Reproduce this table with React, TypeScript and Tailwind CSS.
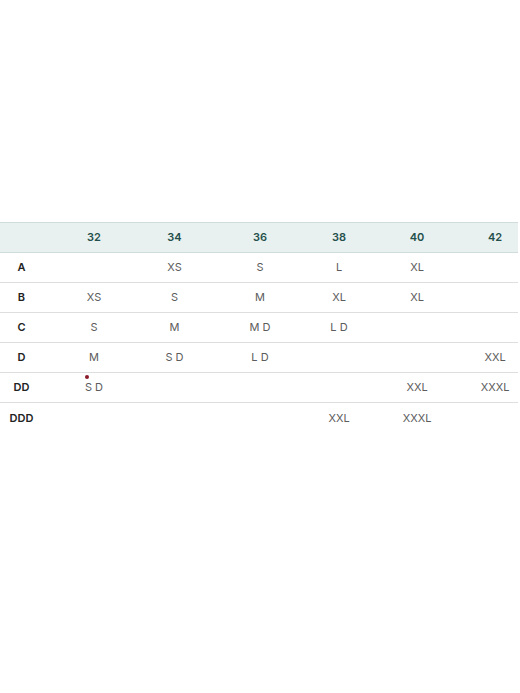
const sizes = ['32', '34', '36', '38', '40', '42'];

const rows: { label: string; cells: string[] }[] = [
  { label: 'A', cells: ['', 'XS', 'S', 'L', 'XL', ''] },
  { label: 'B', cells: ['XS', 'S', 'M', 'XL', 'XL', ''] },
  { label: 'C', cells: ['S', 'M', 'M D', 'L D', '', ''] },
  { label: 'D', cells: ['M', 'S D', 'L D', '', '', 'XXL'] },
  { label: 'DD', cells: ['S D', '', '', '', 'XXL', 'XXXL'] },
  { label: 'DDD', cells: ['', '', '', 'XXL', 'XXXL', ''] },
];

export default function App() {
  return (
    <div className="w-[520px] h-[693px] bg-white pt-[222px] font-['Inter',sans-serif]">
      <table className="w-[518px] table-fixed border-collapse text-[11px]">
        <colgroup>
          <col className="w-[43px]" />
          <col className="w-[102px]" />
          <col className="w-[59px]" />
          <col className="w-[112px]" />
          <col className="w-[46px]" />
          <col className="w-[110px]" />
          <col className="w-[46px]" />
        </colgroup>
        <thead>
          <tr className="h-[30px] bg-[#e8f1f0] border-t border-b border-[#cfdcda]">
            <th></th>
            {sizes.map((s) => (
              <th key={s} className="text-center font-semibold text-[#244f4a]">
                {s}
              </th>
            ))}
          </tr>
        </thead>
        <tbody>
          {rows.map((row, i) => (
            <tr
              key={row.label}
              className={`h-[30px] ${i < rows.length - 1 ? 'border-b border-[#dedede]' : ''}`}
            >
              <td className="text-center font-semibold text-[#222]">{row.label}</td>
              {row.cells.map((c, j) => (
                <td key={j} className="text-center text-[#5c5c5c] whitespace-nowrap">
                  {row.label === 'DD' && j === 0 ? (
                    <span className="relative">
                      <span className="absolute left-[0px] -top-[5px] w-[4px] h-[4px] rounded-full bg-[#8b1a2b]"></span>
                      {c}
                    </span>
                  ) : (
                    c
                  )}
                </td>
              ))}
            </tr>
          ))}
        </tbody>
      </table>
    </div>
  );
}
